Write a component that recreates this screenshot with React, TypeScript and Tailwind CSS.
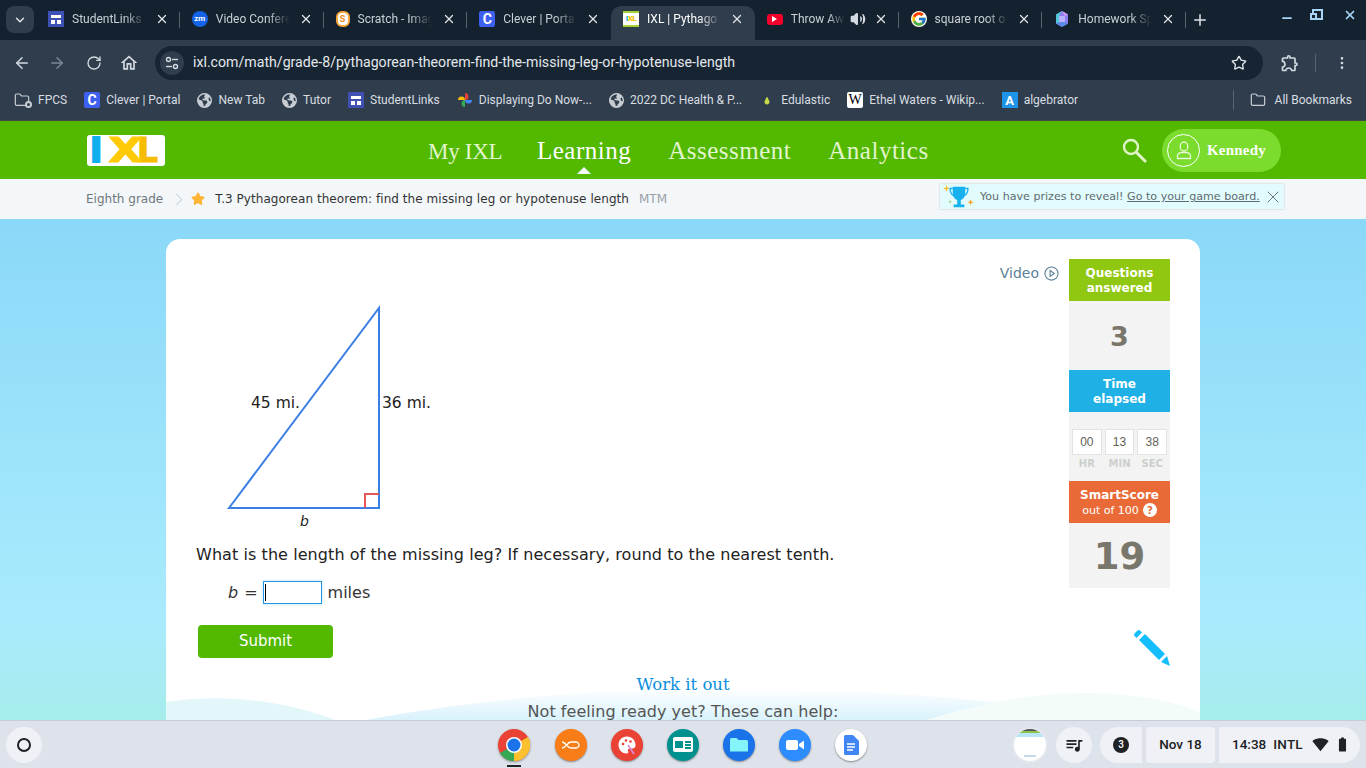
import { ArrowLeft, ArrowRight, ChevronDown, EllipsisVertical, Folder, Minus, Plus, RotateCw, Star, Volume2, X } from "lucide-react";
import { FaEarthAmericas } from "react-icons/fa6";
import { FcGoogle } from "react-icons/fc";
import { MdBatteryFull, MdOutlineExtension, MdOutlineHome, MdQueueMusic, MdSignalWifi4Bar } from "react-icons/md";

const chromeFont = "font-['Roboto','Liberation_Sans',sans-serif]";
const pageFont = "font-['DejaVu_Sans','Liberation_Sans',sans-serif]";
const slabFont = "font-['Liberation_Serif','DejaVu_Serif',serif]";

function StudentLinksIcon() {
  return (
    <span className="flex h-4 w-4 shrink-0 flex-col items-center justify-center gap-[2px] bg-[#3f51b5] px-[3px]">
      <span className="h-[3px] w-full bg-white" />
      <span className="flex w-full gap-[2px]">
        <span className="h-1 flex-1 bg-white" />
        <span className="h-1 flex-1 bg-white" />
      </span>
    </span>
  );
}

function ZoomIcon() {
  return (
    <span className="flex h-4 w-4 shrink-0 items-center justify-center rounded-full bg-[#1463e6] text-[8px] font-bold leading-none text-white">
      zm
    </span>
  );
}

function ScratchIcon() {
  return (
    <span className="flex h-4 w-3.5 shrink-0 items-center justify-center rounded-[6px] border-2 border-[#f6a63a] bg-white text-[9px] font-bold leading-none text-[#f08a1d]">
      S
    </span>
  );
}

function CleverIcon() {
  return (
    <span className="flex h-4 w-4 shrink-0 items-center justify-center rounded-[2px] bg-[#3d60f0] text-[14px] font-bold leading-none text-white">
      C
    </span>
  );
}

function IxlFavicon() {
  return (
    <span className="flex h-4 w-4 shrink-0 items-center justify-center border-t-2 border-b-2 border-[#a4d233] bg-white text-[8px] font-black leading-none tracking-[-0.5px] text-[#f5c400]">
      <span className="text-[#18aee8]">I</span>XL
    </span>
  );
}

function YoutubeIcon() {
  return (
    <span className="flex h-[11px] w-4 shrink-0 items-center justify-center rounded-[3px] bg-[#f4002b]">
      <span className="h-0 w-0 border-y-[3px] border-l-[5px] border-y-transparent border-l-white" />
    </span>
  );
}

function CrystalIcon() {
  return (
    <svg viewBox="0 0 16 16" className="h-4 w-4 shrink-0">
      <polygon points="8,0 14,3.5 14,12.5 8,16 2,12.5 2,3.5" fill="#8f7cf0" />
      <polygon points="8,0 2,3.5 2,12.5 5,11 5,5" fill="#4fc7d8" />
      <polygon points="8,0 14,3.5 11,5" fill="#d59af5" />
      <polygon points="5,5 11,5 11,11 5,11" fill="#b9b2fa" />
      <polygon points="8,16 2,12.5 5,11 11,11 14,12.5" fill="#5d8be8" />
    </svg>
  );
}

function Globe() {
  return <FaEarthAmericas className="h-[15px] w-[15px] shrink-0 text-[#c7cdd3]" />;
}

function PinwheelIcon() {
  return (
    <svg viewBox="0 0 16 16" className="h-4 w-4 shrink-0">
      <path d="M8 8V1a3.5 3.5 0 0 1 0 7z" fill="#ea4335" />
      <path d="M8 8h7a3.5 3.5 0 0 1-7 0z" fill="#4285f4" />
      <path d="M8 8v7a3.5 3.5 0 0 1 0-7z" fill="#34a853" />
      <path d="M8 8H1a3.5 3.5 0 0 1 7 0z" fill="#fbbc04" />
    </svg>
  );
}

function PearIcon() {
  return (
    <svg viewBox="0 0 16 16" className="h-4 w-4 shrink-0">
      <path d="M8 5c.7 0 1 1 1.300 2 .4 1.200 1.200 1.800 1.200 3 0 1.600-1.100 2.500-2.500 2.500S5.500 11.600 5.500 10c0-1.200.8-1.800 1.200-3C7 6 7.300 5 8 5z" fill="#c4d84a" />
    </svg>
  );
}

function TuneIcon() {
  return (
    <svg viewBox="0 0 16 16" className="h-4 w-4" fill="none" stroke="#d5dae0" strokeWidth="1.400">
      <circle cx="4.500" cy="4.500" r="2" />
      <path d="M8 4.500h6" />
      <circle cx="11.500" cy="11.500" r="2" />
      <path d="M2 11.500h6" />
    </svg>
  );
}

const tabs = [
  { title: "StudentLinks", icon: <StudentLinksIcon /> },
  { title: "Video Confere", icon: <ZoomIcon /> },
  { title: "Scratch - Imag", icon: <ScratchIcon /> },
  { title: "Clever | Porta", icon: <CleverIcon /> },
  { title: "IXL | Pythago", icon: <IxlFavicon />, active: true },
  { title: "Throw Aw", icon: <YoutubeIcon />, audio: true },
  { title: "square root o", icon: <FcGoogle className="h-4 w-4 shrink-0 rounded-full bg-white" /> },
  { title: "Homework Sp", icon: <CrystalIcon /> },
];

const bookmarks = [
  { title: "FPCS", icon: <FolderGear /> },
  { title: "Clever | Portal", icon: <CleverIcon /> },
  { title: "New Tab", icon: <Globe /> },
  { title: "Tutor", icon: <Globe /> },
  { title: "StudentLinks", icon: <StudentLinksIcon /> },
  { title: "Displaying Do Now-...", icon: <PinwheelIcon /> },
  { title: "2022 DC Health & P...", icon: <Globe /> },
  { title: "Edulastic", icon: <PearIcon /> },
  {
    title: "Ethel Waters - Wikip...",
    icon: (
      <span className="flex h-4 w-4 shrink-0 items-center justify-center rounded-[2px] bg-white font-['Liberation_Serif',serif] text-[14px] leading-none text-black">
        W
      </span>
    ),
  },
  {
    title: "algebrator",
    icon: (
      <span className="flex h-4 w-4 shrink-0 items-center justify-center bg-[#1e94e8] text-[13px] font-bold leading-none text-white">
        A
      </span>
    ),
  },
];

function FolderGear() {
  return (
    <span className="relative block h-4 w-[18px] shrink-0">
      <Folder className="h-4 w-4 text-[#c7cdd3]" strokeWidth={1.800} />
      <span className="absolute bottom-0 right-0 h-[7px] w-[7px] rounded-full border-2 border-[#c7cdd3] bg-[#2f3d4c]" />
    </span>
  );
}

function BrowserChrome() {
  return (
    <div className={`${chromeFont} shrink-0`}>
      {/* tab strip */}
      <div className="flex h-[40px] items-end bg-[#14212e] pl-[6px]">
        <div className="mb-[7px] mr-[2px] flex h-[27px] w-7 items-center justify-center rounded-lg bg-[#2f3d4c] text-[#dfe4e9]">
          <ChevronDown className="h-3.5 w-3.5" strokeWidth={2.500} />
        </div>
        {tabs.map((tab, i) => {
          const nextActive = tabs[i + 1]?.active;
          return (
            <div
              key={tab.title}
              className={`relative flex h-[34px] w-[143.750px] items-center pb-[8px] pl-3 pr-[11px] ${tab.active ? "rounded-t-[10px] bg-[#2f3d4c] text-white" : "text-[#c9d0d6]"}`}
            >
              {tab.icon}
              <span className={`ml-2 whitespace-nowrap text-[12px] [mask-image:linear-gradient(to_right,black_70%,transparent)] ${tab.audio ? "w-[54px]" : "w-[74px]"}`}>
                {tab.title}
              </span>
              <span className="ml-auto flex items-center">
                {tab.audio && <Volume2 className="mr-[8px] h-4 w-4 text-[#d5dae0]" fill="#d5dae0" />}
                <X className="h-[14px] w-[14px] shrink-0 text-[#e1e5e9]" strokeWidth={2.200} />
              </span>
              {!tab.active && !nextActive && <span className="absolute right-0 top-[6px] h-[16px] w-px bg-[#57636f]" />}
            </div>
          );
        })}
        <Plus className="mb-[11px] ml-[5px] h-[18px] w-[18px] text-[#dfe4e9]" strokeWidth={2} />
        <div className="mb-[15px] ml-auto mr-[9px] flex items-center text-[#a7d4f7]">
          <Minus className="mt-[7px] h-[14px] w-[14px]" strokeWidth={3} />
          <span className="relative ml-[18px] block h-[11px] w-[11px] border-2 border-[#a7d4f7]">
            <span className="absolute -left-[4px] top-[2px] h-[7px] w-[7px] border-2 border-[#a7d4f7] bg-[#14212e]" />
          </span>
          <X className="ml-[20px] h-[14px] w-[14px]" strokeWidth={3} />
        </div>
      </div>
      {/* toolbar */}
      <div className="flex h-[42px] items-start bg-[#2f3d4c] pl-[13px] pr-[10px] pt-[6px]">
        <div className="flex h-[34px] items-center">
          <ArrowLeft className="h-[18px] w-[18px] text-[#d5dae0]" />
          <ArrowRight className="ml-[17px] h-[18px] w-[18px] text-[#7b8792]" />
          <RotateCw className="ml-[20px] h-4 w-4 text-[#d5dae0]" />
          <MdOutlineHome className="ml-[17px] h-[20px] w-[20px] text-[#d5dae0]" />
          <div className="ml-[16px] flex h-[34px] w-[1108px] items-center rounded-full bg-[#172533] pl-[5px] pr-[16px]">
            <span className="flex h-6 w-6 items-center justify-center rounded-full bg-[#2f3d4c]">
              <TuneIcon />
            </span>
            <span className="ml-[9px] flex-1 whitespace-nowrap text-[14.150px] text-[#e4e8ec]">
              ixl.com/math/grade-8/pythagorean-theorem-find-the-missing-leg-or-hypotenuse-length
            </span>
            <Star className="h-4 w-4 text-[#e4e8ec]" strokeWidth={2} />
          </div>
          <MdOutlineExtension className="ml-[17px] h-5 w-5 text-[#d5dae0]" />
          <span className="ml-[15px] h-[18px] w-px bg-[#57636f]" />
          <EllipsisVertical className="ml-[18px] h-4 w-4 text-[#d5dae0]" />
        </div>
      </div>
      {/* bookmarks */}
      <div className="flex h-[39px] items-center border-b border-[#444] bg-[#2f3d4c] pb-[2px] pl-[14px] pr-[14px] text-[12px] tracking-[0.01px] text-[#d9dde2]">
        {bookmarks.map((b) => (
          <div key={b.title} className="mr-[17px] flex items-center gap-[6px] whitespace-nowrap">
            {b.icon}
            <span>{b.title}</span>
          </div>
        ))}
        <span className="ml-auto mr-[16px] h-5 w-px bg-[#57636f]" />
        <Folder className="h-4 w-4 text-[#c7cdd3]" strokeWidth={1.800} />
        <span className="ml-[9px] whitespace-nowrap">All Bookmarks</span>
      </div>
    </div>
  );
}

function IxlHeader() {
  return (
    <div className="shrink-0">
      <div className="relative flex h-[58px] items-center bg-[#52b800] pl-[87px] pr-[85px]">
        <div className="flex h-[31px] w-[78px] items-center rounded-[3px] bg-white pl-[3px] font-['DejaVu_Sans',sans-serif] text-[33px] font-bold leading-[31px]">
          <span className="w-[12px] text-center text-[#10adef] [-webkit-text-stroke:2px_#10adef]">I</span>
          <span className="ml-[5px] inline-block w-[37px] scale-x-[1.350] text-center text-[#ffca05] [-webkit-text-stroke:1px_#ffca05]">X</span>
          <span className="-ml-[7px] text-[#f6bd00] [-webkit-text-stroke:1px_#f6bd00]">L</span>
        </div>
        <nav className={`${slabFont} ml-[263px] flex items-baseline gap-[37px] pt-[1px] text-[25px] tracking-[0.5px] text-[#e2f5cd]`}>
          <span className="w-[72px] whitespace-nowrap text-[23px] tracking-[-0.300px]">My IXL</span>
          <span className="relative text-white">
            Learning
            <span className="absolute left-1/2 top-[35px] h-0 w-0 -translate-x-1/2 border-x-[7px] border-b-[7px] border-x-transparent border-b-[#f3f7fa]" />
          </span>
          <span>Assessment</span>
          <span>Analytics</span>
        </nav>
        <svg viewBox="0 0 26 26" className="ml-auto h-[26px] w-[26px]" fill="none" stroke="#e0f4c6" strokeWidth="2.400">
          <circle cx="10" cy="10" r="7" />
          <path d="M15.500 15.500 24 24" strokeWidth="3" strokeLinecap="round" />
        </svg>
        <div className="ml-[15px] flex h-[43px] w-[119px] items-center rounded-full bg-[#7bdc2e] pl-[5px]">
          <span className="flex h-[33px] w-[33px] items-center justify-center rounded-full border border-white">
            <svg viewBox="0 0 20 20" className="h-5 w-5" fill="none" stroke="#e8f8d8" strokeWidth="1.300">
              <ellipse cx="10" cy="6.500" rx="3.800" ry="4.500" />
              <path d="M3.500 18.500v-2.500c0-2 2-3.500 3.500-3.500h6c1.500 0 3.500 1.500 3.500 3.500v2.500z" />
            </svg>
          </span>
          <span className={`${slabFont} ml-[7px] text-[15px] font-bold tracking-[0.2px] text-white`}>Kennedy</span>
        </div>
      </div>
      <div className={`${pageFont} flex h-[40px] items-center bg-[#f3f7fa] pl-[86px] pr-[82px] text-[12px]`}>
        <span className="text-[#70777c]">Eighth grade</span>
        <svg viewBox="0 0 8 14" className="ml-[12px] h-[13px] w-[8px]" fill="none" stroke="#b9bfc4" strokeWidth="1">
          <path d="M1 1l6 6-6 6" />
        </svg>
        <Star className="ml-[8px] h-[14px] w-[14px] text-[#ffb433]" fill="#ffb433" />
        <span className="ml-[10px] tracking-[0.05px] text-[#333]">T.3 Pythagorean theorem: find the missing leg or hypotenuse length</span>
        <span className="ml-[10px] text-[#9aa0a5]">MTM</span>
        <div className="mb-[5px] ml-auto flex h-[25px] w-[344px] items-center bg-[#e2fcfe] pl-[2px] shadow-[0_0_2px_rgba(0,0,0,0.2)]">
          <svg viewBox="0 0 34 28" className="h-[25px] w-[34px] shrink-0">
            <path d="M3 1l1 3 3 1-3 1-1 3-1-3-3-1 3-1z" fill="#fbc02d" />
            <path d="M10 3h14v7c0 5-3 7-5 8v5h4v3H11v-3h4v-5c-2-1-5-3-5-8z" fill="#17b1ef" />
            <path d="M10 5H7c0 5 2 7 4 8M24 5h3c0 5-2 7-4 8" fill="none" stroke="#17b1ef" strokeWidth="1.500" />
            <path d="M30 17l.9 2.600 2.600.9-2.600.9-.9 2.600-.9-2.600-2.600-.9 2.600-.9z" fill="#fb9d1c" />
            <path d="M7 18l.5 1.500 1.500.5-1.500.5-.5 1.500-.5-1.500-1.500-.5 1.500-.5z" fill="#8cc63f" />
          </svg>
          <span className="ml-[4px] whitespace-nowrap pt-[2px] text-[11.100px] text-[#5f6b70]">
            You have prizes to reveal! <span className="underline">Go to your game board.</span>
          </span>
          <X className="ml-[3px] h-5 w-5 shrink-0 text-[#6d777c]" strokeWidth={1.200} />
        </div>
      </div>
    </div>
  );
}

function Triangle() {
  return (
    <svg viewBox="0 0 240 240" className="ml-[24px] mt-[13px] h-[240px] w-[240px]">
      <path d="M9 208L159 8V208z" fill="none" stroke="#3a7fe6" strokeWidth="2" />
      <path d="M145 208V194H159" fill="none" stroke="#e8565a" strokeWidth="2" />
      <g fontFamily="'DejaVu Sans', sans-serif" fontSize="15.500" fill="#222">
        <text x="31" y="108">45 mi.</text>
        <text x="162" y="108">36 mi.</text>
        <text x="80" y="226" fontStyle="italic" fontSize="14">b</text>
      </g>
    </svg>
  );
}

function Sidebar() {
  return (
    <div className="w-[101px] shrink-0 text-center">
      <div className="flex h-[42px] flex-col justify-center bg-[#8fc711] pt-[2px] text-[12px] font-bold leading-[15px] text-white">
        <span>Questions</span>
        <span>answered</span>
      </div>
      <div className="flex h-[69px] items-center justify-center bg-[#f3f3f3] pt-[4px] text-[27px] font-bold text-[#79766c]">3</div>
      <div className="flex h-[42px] flex-col justify-center bg-[#1fb1e6] pt-[2px] text-[12px] font-bold leading-[15px] text-white">
        <span>Time</span>
        <span>elapsed</span>
      </div>
      <div className="h-[69px] bg-[#f3f3f3] px-[3px] pt-[17px]">
        <div className="flex gap-[3px]">
          {["00", "13", "38"].map((v) => (
            <span key={v} className="flex h-[26px] flex-1 items-center justify-center border border-[#e2e2e2] bg-white font-['Liberation_Sans',sans-serif] text-[12px] text-[#5f5f55]">
              {v}
            </span>
          ))}
        </div>
        <div className="mt-[1px] flex gap-[3px] text-[10px] font-bold text-[#ccd0cc]">
          {["HR", "MIN", "SEC"].map((v) => (
            <span key={v} className="flex-1">
              {v}
            </span>
          ))}
        </div>
      </div>
      <div className="flex h-[42px] flex-col justify-center bg-[#e96a36] pt-[1px] text-white">
        <span className="text-[12px] font-bold leading-[15px]">SmartScore</span>
        <span className="flex items-center justify-center gap-[4px] text-[11px] leading-[15px]">
          out of 100
          <span className="flex h-[14px] w-[14px] items-center justify-center rounded-full bg-white text-[10px] font-bold text-[#e96a36]">?</span>
        </span>
      </div>
      <div className="flex h-[65px] items-center justify-center bg-[#f3f3f3] pt-[3px] text-[37px] font-bold text-[#79766c]">19</div>
      <svg viewBox="0 0 37 37" className="ml-auto mt-[41px] h-[37px] w-[37px]">
        <path d="M1.500 4.500 4.500 1.500a2 2 0 0 1 2.500 0l2 2-5.500 5.500-2-2a2 2 0 0 1 0-2.500z" fill="#14bdfb" />
        <path d="M6 11l6-6 20 20-6 6z" fill="#14bdfb" />
        <path d="M28 33l6-6 3 10z" fill="#14bdfb" />
      </svg>
    </div>
  );
}

function Card() {
  return (
    <div className={`${pageFont} relative h-[520px] w-[1034px] overflow-hidden rounded-[14px] bg-white pt-[20px]`}>
      {/* hills at the foot of the card */}
      <svg viewBox="0 0 1034 40" preserveAspectRatio="none" className="absolute left-0 top-[441px] h-[40px] w-[1034px]">
        <defs>
          <linearGradient id="blueHill" x1="0" y1="0" x2="0" y2="1">
            <stop offset="0" stopColor="#ffffff" />
            <stop offset="1" stopColor="#d9f2fc" />
          </linearGradient>
        </defs>
        <path d="M200 40C300 22 420 8 560 8C700 8 840 20 960 40z" fill="url(#blueHill)" />
        <path d="M0 22C50 14 110 18 170 40H0z" fill="#e3f6fa" />
        <path d="M760 40C830 18 880 13 920 13C970 13 1010 22 1034 32V40z" fill="#f3fcf8" />
      </svg>
      <div className="relative flex pl-[30px] pr-[30px]">
        <div className="flex-1">
          <div className="flex h-[28px] items-center justify-end gap-[5px] pr-[10px] text-[14px] text-[#5c8298]">
            Video
            <svg viewBox="0 0 16 16" className="h-[15px] w-[15px]" fill="none" stroke="#5c8298" strokeWidth="1.200">
              <circle cx="8" cy="8" r="7" />
              <path d="M6.500 4.800 11 8l-4.500 3.200z" />
            </svg>
          </div>
          <Triangle />
          <p className="mt-[4px] text-[16px] leading-[22px] tracking-[0.07px] text-[#222]">
            What is the length of the missing leg? If necessary, round to the nearest tenth.
          </p>
          <div className="ml-[32px] mt-[15px] flex h-[23px] items-center text-[16px] text-[#333]">
            <span className="italic">b</span>
            <span className="ml-[6px]">=</span>
            <span className="ml-[5px] flex h-[23px] w-[59px] items-center border border-[#1f97e6] pl-[1px] shadow-[0_0_3px_rgba(31,151,230,0.3)]">
              <span className="h-[17px] w-px bg-black" />
            </span>
            <span className="ml-[6px]">miles</span>
          </div>
          <button className="ml-[2px] mt-[21px] h-[33px] w-[135px] rounded-[4px] bg-[#52b800] text-[15px] text-white">Submit</button>
        </div>
        <Sidebar />
      </div>
      <div className="relative mt-[8px] text-center font-['DejaVu_Serif',serif] text-[16.500px] leading-[22px] text-[#0a8fe0]">Work it out</div>
      <div className="relative mt-[5px] text-center text-[16px] leading-[22px] tracking-[0.04px] text-[#555]">Not feeling ready yet? These can help:</div>
    </div>
  );
}

function ChromeLogo() {
  return (
    <svg viewBox="0 0 32 32" className="h-8 w-8 drop-shadow-[0_1px_1px_rgba(0,0,0,0.35)]">
      <circle cx="16" cy="16" r="16" fill="#ea4335" />
      <path d="M16 16 2 24a16 16 0 0 0 14 8z" fill="#34a853" />
      <path d="M16 16l14-8a16 16 0 0 1-14 24z" fill="#fbc02d" />
      <circle cx="16" cy="16" r="8" fill="#fff" />
      <circle cx="16" cy="16" r="6.500" fill="#1a73e8" />
    </svg>
  );
}

function ShelfApp({ bg, children }: { bg: string; children: React.ReactNode }) {
  return (
    <span className={`flex h-8 w-8 items-center justify-center rounded-full shadow-[0_1px_2px_rgba(0,0,0,0.4)] ${bg}`}>{children}</span>
  );
}

function Shelf() {
  const pill = "flex h-9 items-center bg-[#eff1f7] text-[#202124]";
  return (
    <div className={`${chromeFont} flex h-[48px] shrink-0 items-center border-t border-[#c8ccd6] bg-[#dee2ea] pl-[6px] pr-[6px]`}>
      <span className={`${pill} w-9 justify-center rounded-full`}>
        <span className="h-[14px] w-[14px] rounded-full border-2 border-[#202124]" />
      </span>
      <div className="ml-[456px] flex gap-[24px]">
        <span className="relative mr-[1px]">
          <ChromeLogo />
          <span className="absolute -bottom-[6px] left-[9px] h-[2px] w-[14px] bg-[#202124]" />
        </span>
        <ShelfApp bg="bg-[#f97d16]">
          <svg viewBox="0 0 20 10" className="h-[10px] w-5" fill="none" stroke="#fff" strokeWidth="1.300">
            <path d="M1 2c4 0 5 6 9 6h5c2 0 3-2 3-3s-1-3-3-3h-5c-4 0-5 6-9 6" />
          </svg>
        </ShelfApp>
        <ShelfApp bg="bg-[#ea4335]">
          <svg viewBox="0 0 20 20" className="h-5 w-5">
            <path d="M10 1.500C5 1.500 1.500 5 1.500 10s4 8.500 8 8.500c2 0 2-1.500 1.500-2.500s0-2.500 2-2.500h2.500c2 0 3-1.500 3-3.500 0-4.500-3.500-8.500-8.500-8.500z" fill="#fff" />
            <circle cx="6" cy="9" r="1.300" fill="#ea4335" />
            <circle cx="9" cy="5.500" r="1.300" fill="#ea4335" />
            <circle cx="13.500" cy="6.500" r="1.300" fill="#ea4335" />
            <path d="M11 10l6 9" stroke="#d98be0" strokeWidth="1.600" />
          </svg>
        </ShelfApp>
        <ShelfApp bg="bg-[#00918f]">
          <span className="flex h-[15px] w-[20px] items-center gap-[2px] rounded-[2px] bg-white p-[2px]">
            <span className="h-[7px] w-[8px] bg-[#00918f]" />
            <span className="flex flex-1 flex-col gap-[1px]">
              <span className="h-[2px] bg-[#00918f]" />
              <span className="h-[2px] bg-[#00918f]" />
              <span className="h-[2px] bg-[#00918f]" />
            </span>
          </span>
        </ShelfApp>
        <ShelfApp bg="bg-[#1a73e8]">
          <svg viewBox="0 0 20 16" className="h-4 w-5">
            <path d="M1 2.500A1.500 1.500 0 0 1 2.500 1h5l2 2h8A1.500 1.500 0 0 1 19 4.500v10H1z" fill="#84f5fa" />
          </svg>
        </ShelfApp>
        <ShelfApp bg="bg-[#2d8cff]">
          <svg viewBox="0 0 20 12" className="h-3 w-5" fill="#fff">
            <rect x="1" y="1" width="12" height="10" rx="2" />
            <path d="M14 5l5-3.500v9L14 7z" />
          </svg>
        </ShelfApp>
        <ShelfApp bg="bg-white">
          <svg viewBox="0 0 16 20" className="h-5 w-4">
            <path d="M1 1.500A1.500 1.500 0 0 1 2.500 0H10l6 6v12.500a1.500 1.500 0 0 1-1.500 1.500h-12A1.500 1.500 0 0 1 1 18.500z" fill="#4285f4" />
            <path d="M4 9h8M4 12h8M4 15h6" stroke="#fff" strokeWidth="1.300" />
          </svg>
        </ShelfApp>
      </div>
      <div className="ml-auto flex items-center">
        <span className="flex h-9 w-9 flex-col overflow-hidden rounded-full border-2 border-[#e4e7ee] bg-white">
          <span className="mx-auto h-[2px] w-4 bg-[#555]" />
          <span className="h-[2px] bg-[#8bc34a]" />
          <span className="h-[4px] bg-[#b8e6f7]" />
          <span className="mx-auto mt-[18px] h-[2px] w-3 bg-[#c6d8e6]" />
        </span>
        <span className={`${pill} ml-[8px] w-9 justify-center rounded-full`}>
          <MdQueueMusic className="h-5 w-5" />
        </span>
        <span className={`${pill} ml-[8px] w-[42px] justify-center rounded-l-full rounded-r-[4px]`}>
          <span className="flex h-4 w-4 items-center justify-center rounded-full bg-[#202124] text-[10px] font-medium text-white">3</span>
        </span>
        <span className={`${pill} ml-[4px] w-[69px] justify-center rounded-[4px] text-[13.500px] font-medium`}>Nov 18</span>
        <span className={`${pill} ml-[4px] w-[141px] rounded-l-[4px] rounded-r-full pl-[13px] text-[13.500px] font-medium`}>
          14:38
          <span className="ml-[7px] tracking-[0.2px]">INTL</span>
          <MdSignalWifi4Bar className="ml-[9px] h-[17px] w-[17px]" />
          <MdBatteryFull className="ml-[5px] h-[17px] w-[17px]" />
        </span>
      </div>
    </div>
  );
}

export default function App() {
  return (
    <div className="flex h-screen w-[1366px] flex-col overflow-hidden">
      <BrowserChrome />
      <IxlHeader />
      <main className="min-h-0 flex-1 overflow-hidden bg-gradient-to-b from-[#8ad8f8] via-[#a9ebfd] via-80% to-[#a5eceb] pl-[166px] pt-[20px]">
        <Card />
      </main>
      <Shelf />
    </div>
  );
}
